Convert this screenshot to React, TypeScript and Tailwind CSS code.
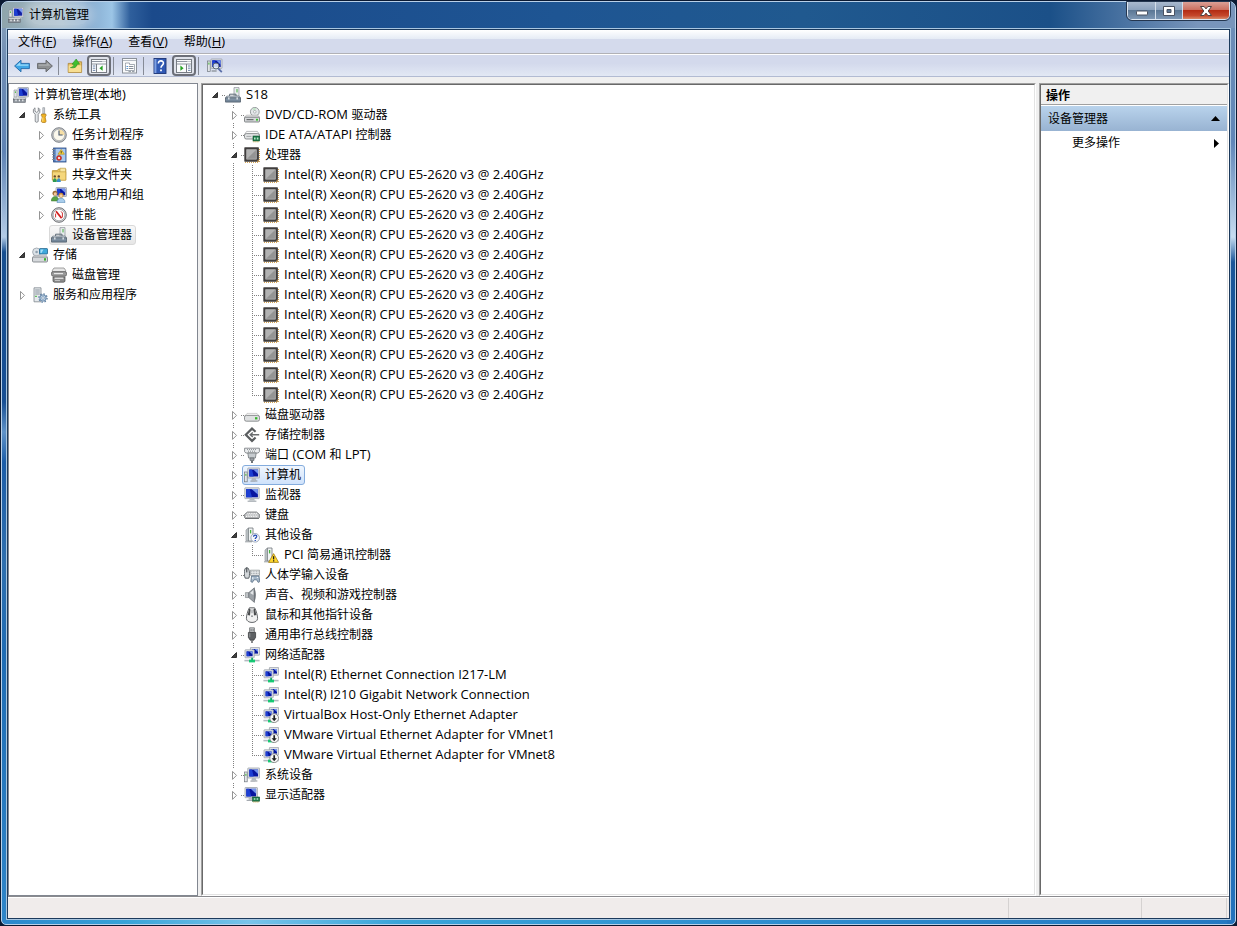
import { useState } from "react";
import type { ReactNode } from "react";

/* ---------- icons (16 x 16 grid) ---------- */

function Svg({ children }: { children: ReactNode }) {
  return (
    <svg viewBox="0 0 16 16" className="size-4 shrink-0" aria-hidden="true">
      {children}
    </svg>
  );
}

function Screen({ x, y, w, h, bezel = 1.2 }: { x: number; y: number; w: number; h: number; bezel?: number }) {
  const l = x + bezel;
  const t = y + bezel;
  const iw = w - bezel * 2;
  const ih = h - bezel * 2;
  return (
    <g>
      <rect x={x} y={y} width={w} height={h} rx="0.5" fill="#dfe2e6" stroke="#9299a2" strokeWidth="0.7" />
      <rect x={l} y={t} width={iw} height={ih} fill="#0816a0" />
      <path d={`M${l} ${t}h${iw * 0.3}l${iw * 0.2} ${ih}h-${iw * 0.5}z`} fill="#1d3fd2" />
      <path d={`M${l + iw * 0.45} ${t}h${iw * 0.55}v${ih * 0.65}z`} fill="#7394ec" />
    </g>
  );
}

const ManageIcon = () => (
  <Svg>
    <Screen x={5} y={0.5} w={10.5} h={9.4} />
    <path d="M1 3h3v7H1z" fill="#dfe2e5" stroke="#8a9098" strokeWidth="0.6" />
    <path d="M2.4 4.4v1.6" stroke="#3db334" strokeWidth="0.9" />
    <path d="M7 10h6l1 1.4H6z" fill="#c6cbd0" />
    <rect x="0.4" y="11" width="12" height="1.8" fill="#eceef0" stroke="#80868e" strokeWidth="0.6" />
    <rect x="0.4" y="12.6" width="12" height="2.8" fill="#8d949c" stroke="#62686f" strokeWidth="0.6" />
    <path d="M2.4 12.6h1.2v1.6H2.4zM5.8 12.6H7v1.6H5.8zM9.2 12.6h1.2v1.6H9.2z" fill="#f2f4f6" />
  </Svg>
);

const ToolsIcon = () => (
  <Svg>
    <path d="M3 .8v3.4L4.7 5.4 6.3 4.2V.8l1.5 1.6v3L6.2 7.3v6.8c0 1.6-3 1.6-3 0V7.3L1.4 5.4v-3z" fill="#e4e7ea" stroke="#75797e" strokeWidth="0.8" />
    <path d="M10.8.7h1.8v6h-1.8z" fill="#d2d6db" stroke="#81878d" strokeWidth="0.6" />
    <path d="M9.6 7h4.2l.3 1.6-1 1.4 1 4.6-1 .9h-2.8l-1-.9 1-4.6-1-1.4z" fill="#f0b323" stroke="#a8761a" strokeWidth="0.7" />
    <path d="M10.8 10.5v4" stroke="#ffe28a" />
  </Svg>
);

const ClockIcon = () => (
  <Svg>
    <circle cx="8" cy="8" r="7.3" fill="#c2c5c9" stroke="#75797e" strokeWidth="0.9" />
    <circle cx="8" cy="8" r="5.7" fill="#fbf8ec" stroke="#9a9da0" strokeWidth="0.6" />
    <path d="M8 2.4A5.6 5.6 0 0 1 13.6 8H8z" fill="#f6dfa6" />
    <path d="M8 3.6V8h3.6" fill="none" stroke="#45566e" strokeWidth="1.1" />
  </Svg>
);

const EventIcon = () => (
  <Svg>
    <rect x="2.6" y="1" width="12.4" height="14" fill="#4d79bd" stroke="#28487e" strokeWidth="0.8" />
    <rect x="4.6" y="1.8" width="9.8" height="12.4" fill="#a9c8ee" />
    <path d="M1.2 2.5h3M1.2 5h3M1.2 7.5h3M1.2 10h3M1.2 12.5h3" stroke="#7d8793" strokeWidth="1" />
    <path d="M10.2 2.4l3.2 4.8H7z" fill="#ffd83b" stroke="#b68b0e" strokeWidth="0.6" />
    <path d="M10.2 4v2.4" stroke="#222" strokeWidth="0.8" />
    <circle cx="8" cy="11" r="2.5" fill="#df3b30" stroke="#9a1d18" strokeWidth="0.5" />
    <path d="M7 10l2 2m0-2l-2 2" stroke="#fff" strokeWidth="0.8" />
  </Svg>
);

const SharedIcon = () => (
  <Svg>
    <path d="M1.4 3.6h5l1-1.6h7.4v11H1.4z" fill="#e9c35a" stroke="#b38b28" strokeWidth="0.7" />
    <path d="M9 1.2h5.6v7H9z" fill="#f8e7a4" stroke="#b99a44" strokeWidth="0.6" />
    <path d="M1.4 4.8h13.4v8.4H1.4z" fill="#f5d77c" stroke="#bd9532" strokeWidth="0.6" />
    <circle cx="3.8" cy="9.4" r="1.2" fill="#6a4a2c" />
    <circle cx="7.8" cy="9.4" r="1.2" fill="#6a4a2c" />
    <path d="M1.8 15c0-5 4-5 4 0z" fill="#2e9a50" />
    <path d="M5.8 15c0-5 4-5 4 0z" fill="#3a8fc9" />
  </Svg>
);

const UsersIcon = () => (
  <Svg>
    <Screen x={5} y={0.5} w={10.5} h={9} />
    <circle cx="4" cy="6.2" r="2.5" fill="#9a6a35" />
    <circle cx="4.3" cy="6.9" r="1.6" fill="#f2c697" />
    <path d="M.3 14c0-6 7.6-6 7.6 0z" fill="#58a244" stroke="#35702a" strokeWidth="0.5" />
    <circle cx="10" cy="8.2" r="2.5" fill="#c68c3a" />
    <circle cx="10" cy="8.8" r="1.6" fill="#f6d0a4" />
    <path d="M6 15.6c0-6 8-6 8 0z" fill="#a8cdec" stroke="#3d76a8" strokeWidth="0.5" />
  </Svg>
);

const PerfIcon = () => (
  <Svg>
    <circle cx="8" cy="8" r="7.3" fill="#d8dadc" stroke="#5d6064" strokeWidth="0.9" />
    <circle cx="8" cy="8" r="5.8" fill="#fff" stroke="#86898d" strokeWidth="0.6" />
    <path d="M4.6 10.4V6.6M11.4 10.4V6l-1.4-1.6" fill="none" stroke="#c33" strokeWidth="1" />
    <path d="M5 4.2l5.6 7" stroke="#d01e1e" strokeWidth="1.8" />
  </Svg>
);

const DeviceIcon = () => (
  <Svg>
    <path d="M9 .6h5v8.6H9z" fill="#e9ecee" stroke="#878e94" strokeWidth="0.7" />
    <path d="M12 2v3.4" stroke="#45b03f" strokeWidth="1" />
    <path d="M4.6 9.2V7.2h6.4v2" fill="none" stroke="#5d6a76" strokeWidth="1" />
    <path d="M1.8 9h12.4l1.4 2H.4z" fill="#bcc7d1" stroke="#68737e" strokeWidth="0.6" />
    <path d="M.5 10.9h15v4.2H.5z" fill="#74879a" stroke="#465360" strokeWidth="0.7" />
    <path d="M3 10.4h1.6v2.2H3zM11.4 10.4H13v2.2h-1.6z" fill="#e8edf1" />
    <path d="M1 12h14" stroke="#9eabb7" strokeWidth="0.6" />
  </Svg>
);

const StorageIcon = () => (
  <Svg>
    <circle cx="4.6" cy="5" r="4" fill="#dde3e8" stroke="#8b949c" strokeWidth="0.7" />
    <circle cx="4.6" cy="5" r="1.3" fill="#8fa0ae" />
    <rect x="7.5" y="1.6" width="8" height="5.4" rx="0.6" fill="#3fa9dc" stroke="#23638a" strokeWidth="0.8" />
    <path d="M8.5 2.6h3l-2 3.4h-1z" fill="#a8e0f8" />
    <path d="M2 8.4h12.4l1.2 2H.6z" fill="#f1f2f3" stroke="#9ba0a5" strokeWidth="0.6" />
    <rect x="0.5" y="10" width="15" height="5" rx="1" fill="#d6d9dc" stroke="#73787d" strokeWidth="0.8" />
    <rect x="12" y="11.2" width="2" height="2.4" fill="#38b22d" />
  </Svg>
);

const DisksIcon = () => (
  <Svg>
    <path d="M3 1h10l1.6 2.2v3H1.4v-3z" fill="#e6e6e6" stroke="#7c7c7c" strokeWidth="0.7" />
    <rect x="0.5" y="4.6" width="15" height="4.6" rx="1.6" fill="#9a9a9a" stroke="#525252" strokeWidth="0.7" />
    <path d="M3 6.6h9" stroke="#eee" strokeWidth="1.1" />
    <path d="M2 10h12v4.4l-1.4.8H3.4L2 14.4z" fill="#8b8b8b" stroke="#4b4b4b" strokeWidth="0.7" />
    <path d="M3.6 11.2h8.8" stroke="#f0f0f0" strokeWidth="1.2" />
    <path d="M4 13.6h5" stroke="#d5d5d5" strokeWidth="0.8" />
  </Svg>
);

const ServicesIcon = () => (
  <Svg>
    <path d="M2 .8h7v14H2z" fill="#e6eaed" stroke="#7d868e" strokeWidth="0.8" />
    <path d="M3.2 3h4.6M3.2 5h4.6M3.2 7h4.6" stroke="#7f8a94" strokeWidth="0.9" />
    <path d="M3.2 9.4h1.6" stroke="#45b43b" strokeWidth="1.2" />
    <circle cx="11" cy="11" r="3.2" fill="#b9cfe4" stroke="#5d7fa1" strokeWidth="0.9" />
    <circle cx="11" cy="11" r="4.1" fill="none" stroke="#5d7fa1" strokeWidth="1.3" strokeDasharray="1.5 1.7" />
    <circle cx="11" cy="11" r="1.3" fill="#fff" stroke="#5d7fa1" strokeWidth="0.6" />
  </Svg>
);

const DvdIcon = () => (
  <Svg>
    <circle cx="10.8" cy="4.8" r="4.4" fill="#e4e8e9" stroke="#7f8688" strokeWidth="0.8" />
    <path d="M10.8 4.8l-2.4-3A4 4 0 0 1 12 1.2z" fill="#bfe3c6" />
    <circle cx="10.8" cy="4.8" r="1.3" fill="#fff" stroke="#8a9193" strokeWidth="0.6" />
    <path d="M2.4 8.2h11.4l1.8 2H.5z" fill="#f6f6f6" stroke="#9a9a9a" strokeWidth="0.6" />
    <rect x="0.5" y="10.2" width="15" height="4.8" rx="0.8" fill="#d6d8da" stroke="#6b6e71" strokeWidth="0.8" />
    <path d="M2.5 12.7h7" stroke="#55585b" strokeWidth="1" />
    <rect x="12" y="11.8" width="2" height="1.8" fill="#36c12c" />
  </Svg>
);

const IdeIcon = () => (
  <Svg>
    <path d="M2.6 4.4h10.8l2 3v2H.6v-2z" fill="#fafafa" stroke="#a2a5a7" strokeWidth="0.7" />
    <rect x="0.5" y="6.6" width="15" height="5.4" rx="1.8" fill="#e2e4e5" stroke="#777b7e" strokeWidth="0.8" />
    <path d="M2.4 9.4h5" stroke="#94989b" strokeWidth="0.8" />
    <rect x="9" y="9" width="6.6" height="5" fill="#1d7b4c" stroke="#0c4f29" strokeWidth="0.6" />
    <path d="M10 10.4h1.6v2H10zM12.8 10.4h1.6v2h-1.6z" fill="#b8e6c6" />
    <path d="M9.4 14.8h6" stroke="#c9a544" strokeWidth="1" strokeDasharray="1 1" />
  </Svg>
);

const CpuIcon = () => (
  <Svg>
    <path d="M1 15.4h14M15.4 2v13" stroke="#c98f2b" strokeWidth="0.9" strokeDasharray="1 1" />
    <rect x="0.3" y="0.3" width="14.6" height="14.4" rx="0.6" fill="#3f3d3d" />
    <path d="M2.6 2.6h9.8v9.6H2.6z" fill="#949494" stroke="#bdbdbd" strokeWidth="0.7" />
    <path d="M3 3h9l-9 8.8z" fill="#b2b2b2" />
    <path d="M12.8 14.4l1.8-1.8v1.8z" fill="#e9a43a" />
  </Svg>
);

const DriveIcon = () => (
  <Svg>
    <path d="M3 6.4h10l2.4 3H.6z" fill="#fafafa" stroke="#b3b3b3" strokeWidth="0.6" />
    <rect x="0.5" y="8.4" width="15" height="5.8" rx="1.8" fill="#dfe1e2" stroke="#777a7c" strokeWidth="0.8" />
    <rect x="11" y="10.2" width="2.4" height="2.2" fill="#33b52a" />
  </Svg>
);

const StorageCtlIcon = () => (
  <Svg>
    <path d="M11.6 4.8L8 1.6 1.8 7.7 8 13.900l3.600-3.400" fill="none" stroke="#5a5d5f" strokeWidth="2.2" />
    <path d="M6.2 7.7h9M8.8 5.4L6.2 7.7 8.800 10" fill="none" stroke="#6a6d6f" strokeWidth="1.4" />
  </Svg>
);

const PortIcon = () => (
  <Svg>
    <path d="M.6 1.2h14.8v3.4L14.200 6H1.800L.6 4.600z" fill="#eceef0" stroke="#71767a" strokeWidth="0.8" />
    <path d="M3 2.6h10M4 4.200h8" stroke="#6f7579" strokeWidth="0.8" strokeDasharray="1 1" />
    <path d="M3.800 6h8.400l-.8 5H4.600z" fill="#c6cbcf" stroke="#71767a" strokeWidth="0.8" />
    <path d="M6 11h4v2.400H6z" fill="#9ea4a9" stroke="#5e6469" strokeWidth="0.7" />
    <path d="M8 13.400V16" stroke="#5e6469" strokeWidth="1.8" />
  </Svg>
);

const ComputerIcon = () => (
  <Svg>
    <Screen x={3.8} y={1} w={11.8} h={10} bezel={1.5} />
    <path d="M8 11h3.600l.8 2.600H7.200z" fill="#b4bac0" />
    <path d="M6.400 13.600h7v1h-7z" fill="#8f959c" />
    <rect x="0.6" y="5" width="2.6" height="9.8" fill="#e4e7ea" stroke="#70777e" strokeWidth="0.7" />
    <path d="M1.900 6.800v2" stroke="#3db334" strokeWidth="1" />
  </Svg>
);

const MonitorIcon = () => (
  <Svg>
    <Screen x={0.8} y={0.8} w={14.4} h={10.8} bezel={1.3} />
    <path d="M6 11.600h4l1 2H5z" fill="#b4bac0" />
    <path d="M3.600 13.600h8.800v1.200H3.600z" fill="#a3a9af" />
  </Svg>
);

const KeyboardIcon = () => (
  <Svg>
    <path d="M3.400 5h9.200l3 2.600v2.800l-1 1H1.400l-1-1V7.600z" fill="#b9bbbd" stroke="#74777a" strokeWidth="0.8" />
    <path d="M3.400 6.400h9.600M2.400 8h11.600M2 9.600h12" stroke="#fff" strokeWidth="1" strokeDasharray="1 0.7" />
    <path d="M1 11.400h14" stroke="#5f6265" strokeWidth="0.8" />
  </Svg>
);

const OtherBody = () => (
  <g>
    <path d="M2 3L4.400 1v12.800H2z" fill="#c5cacd" stroke="#83898e" strokeWidth="0.6" />
    <path d="M4.400 1H9v13H4.400z" fill="#f1f3f4" stroke="#6f757a" strokeWidth="0.8" />
    <path d="M6.600 3v3.400" stroke="#48b53f" strokeWidth="1.3" />
    <path d="M1 14.800h7" stroke="#8c9297" strokeWidth="0.9" />
  </g>
);

const OtherIcon = () => (
  <Svg>
    <OtherBody />
    <circle cx="11.2" cy="10.8" r="4.3" fill="#f6f8fb" stroke="#7d8ca3" strokeWidth="0.7" />
    <path d="M9.600 9.700c0-2.300 3.400-2 3.100 0-.2 1.100-1.500 1-1.500 2.300" fill="none" stroke="#1f48b4" strokeWidth="1.2" />
    <path d="M10.600 13h1.300v1h-1.300z" fill="#1f48b4" />
  </Svg>
);

const WarnIcon = () => (
  <Svg>
    <OtherBody />
    <path d="M10.600 6.600l5 8.800h-10z" fill="#ffd92e" stroke="#a27d10" strokeWidth="0.8" strokeLinejoin="round" />
    <path d="M10.600 9.200v3.200" stroke="#1c1c1c" strokeWidth="1.3" />
    <path d="M10 13.200h1.300v1.200H10z" fill="#1c1c1c" />
  </Svg>
);

const HidIcon = () => (
  <Svg>
    <path d="M2.800.6c3 0 3.200 8 2 10.600H1.200C-.2 8-.2.6 2.800.6z" fill="#d4d8db" stroke="#4c5257" strokeWidth="0.9" />
    <path d="M2.800 1v4.400" stroke="#33383c" />
    <path d="M6.400 3.200h9.200v5.200H6.400z" fill="#eceeef" stroke="#84898d" strokeWidth="0.7" />
    <path d="M7.200 4.800h8M7.200 6.600h8" stroke="#8e9499" strokeWidth="0.8" strokeDasharray="1 0.6" />
    <path d="M7.600 9h7.400l.8 5.600-1.600.8-1.600-2.600H10l-1.600 2.600-1.600-.8z" fill="#a4b6c8" stroke="#4a6178" strokeWidth="0.7" />
    <path d="M8.800 10.200v2M12.800 10.400h1.400" stroke="#f5fafc" strokeWidth="1" />
  </Svg>
);

const SoundIcon = () => (
  <Svg>
    <path d="M1.400 5.600h3.400v5H1.400z" fill="#bfc3c6" stroke="#787d82" strokeWidth="0.6" />
    <path d="M4.800 5.600L10.400.8v14.600l-5.600-4.800z" fill="#9da3a8" stroke="#60666b" strokeWidth="0.7" />
    <path d="M6 6l3.400-3v5z" fill="#e3e6e8" />
    <path d="M10.400 1.600c1.800 3 1.800 10 0 13z" fill="#5f656a" />
  </Svg>
);

const MouseIcon = () => (
  <Svg>
    <path d="M5.400.8h5.200c1.800 3 3 8 3 10.600 0 5.400-11.200 5.400-11.200 0 0-2.600 1.200-7.600 3-10.600z" fill="#f1f1f1" stroke="#55585b" strokeWidth="0.9" />
    <path d="M5.200 1.600L3.600 8l2.400.6.6-6.200zM10.800 1.600L12.400 8l-2.400.6-.6-6.200z" fill="#4a4c4e" />
    <path d="M8 2.400v3.800" stroke="#a9adb0" strokeWidth="1.4" />
    <circle cx="8" cy="9.2" r="0.9" fill="#85898c" />
  </Svg>
);

const UsbIcon = () => (
  <Svg>
    <path d="M5.600.8h4.800v4.600H5.600z" fill="#c9ccce" stroke="#6b6e71" strokeWidth="0.8" />
    <path d="M6.600 2.200h1v1.600h-1zM8.600 2.200h1v1.600h-1z" fill="#55585b" />
    <path d="M4.400 5.400h7.200v5l-1.800 2.800H6.200l-1.800-2.800z" fill="#5d6063" stroke="#303234" strokeWidth="0.7" />
    <path d="M5.800 6.200v4" stroke="#94989b" />
    <path d="M8 13.200V16" stroke="#6b6e71" strokeWidth="1.6" />
  </Svg>
);

const NetBody = () => (
  <g>
    <Screen x={6.4} y={0.4} w={9.2} h={7.8} bezel={1.6} />
    <Screen x={1} y={2.8} w={9.2} h={8} bezel={1.6} />
    <path d="M.4 13.600h15.200" stroke="#b3bac0" strokeWidth="1.6" />
    <path d="M5 12.600h6v2.800H5z" fill="#17c974" />
    <path d="M7.200 10.800h1.800v2.400H7.200z" fill="#16ad67" />
  </g>
);

const NetIcon = () => (
  <Svg>
    <NetBody />
  </Svg>
);

const NetDownIcon = () => (
  <Svg>
    <NetBody />
    <circle cx="11.2" cy="11.2" r="4.4" fill="#f7f7f7" stroke="#777" strokeWidth="0.8" />
    <path d="M11.200 8.200v4" stroke="#222" strokeWidth="1.7" />
    <path d="M8.600 11.200h5.200l-2.600 3z" fill="#222" />
  </Svg>
);

const DisplayIcon = () => (
  <Svg>
    <Screen x={1} y={0.5} w={12.4} h={10.2} bezel={1.3} />
    <path d="M4.600 10.700h3.800v2H4.600z" fill="#b4bac0" />
    <path d="M2.600 12.800h6v1h-6z" fill="#8f959c" />
    <rect x="8.6" y="10" width="7" height="4.2" fill="#1d7b4c" stroke="#0c4f29" strokeWidth="0.6" />
    <path d="M9.800 11.200h1.600v1.600H9.800zM12.600 11.200h1.600v1.600h-1.600z" fill="#b8e6c6" />
    <path d="M9.400 15h6" stroke="#c9a544" strokeWidth="1" strokeDasharray="1 1" />
  </Svg>
);

/* toolbar icons */

const BackIcon = () => (
  <Svg>
    <path d="M.6 8L7 2.200v3.200h8.400v5.200H7v3.200z" fill="#3fa6e6" stroke="#1f66a8" strokeWidth="0.9" strokeLinejoin="round" />
    <path d="M2.200 7.800l4-3.600v2.200h8.200v1.400z" fill="#9bdcfa" />
  </Svg>
);

const ForwardIcon = () => (
  <Svg>
    <path d="M15.400 8L9 2.200v3.200H.6v5.200H9v3.200z" fill="#8e9092" stroke="#606264" strokeWidth="0.9" strokeLinejoin="round" />
    <path d="M13.600 7.800l-3.800-3.400v2H1.600v1.400z" fill="#acaeb0" />
  </Svg>
);

const UpFolderIcon = () => (
  <Svg>
    <path d="M1.200 5.400h6l1-1.600h6.400v10.600H1.200z" fill="#e8c463" stroke="#a98235" strokeWidth="0.8" />
    <path d="M1.600 7.400h12.600v6.600H1.600z" fill="#f7de91" />
    <path d="M3.400 9.600c2.400-.4 3.400-1.600 3.600-3.400H5L9.200 1l3.400 5.200h-2.400c-.4 3-2.800 4.200-6.800 3.400z" fill="#3fc02f" stroke="#2a8f22" strokeWidth="0.6" />
  </Svg>
);

function PaneIcon({ right }: { right?: boolean }) {
  return (
    <Svg>
      <rect x="0.5" y="1.5" width="15" height="13" fill="#fafbfc" stroke="#787d84" />
      <path d="M1 3.500h14M1 6h14" stroke="#9096a0" />
      <path d="M11.500 3.500h1M13.500 3.500h1" stroke="#fff" />
      <path d={right ? "M10.500 6v8.500" : "M5.500 6v8.500"} stroke="#787d84" />
      <path d={right ? "M12 8h2.500M12 10.200h2.500M12 12.400h2.500" : "M1.800 8h2.500M1.800 10.200h2.500M1.800 12.400h2.500"} stroke="#6d86ab" />
      <path d={right ? "M4.400 7.600v5.200L7.600 10.200z" : "M11.600 7.600v5.200L8.400 10.200z"} fill="#26a222" />
    </Svg>
  );
}

const PropsIcon = () => (
  <Svg>
    <rect x="0.5" y="0.5" width="14" height="14.5" fill="#f8f9fa" stroke="#8b9199" />
    <path d="M1 2.500h13" stroke="#b4bac2" />
    <path d="M3.500 6.500V5h4v1.500h5v6h-9z" fill="#fff" stroke="#8f98a2" strokeWidth="0.8" />
    <path d="M4.600 8.500h1.200M4.600 10.500h1.200" stroke="#2b79c9" />
    <path d="M6.800 8.500h4.600M6.800 10.500h4.600" stroke="#868e97" />
    <path d="M6.500 13.600H9M10 13.600h2.500" stroke="#8f98a2" />
  </Svg>
);

const HelpIcon = () => (
  <Svg>
    <rect x="2" y="0.5" width="12" height="15" fill="#3059b5" stroke="#1c3474" strokeWidth="0.9" />
    <path d="M2.400 1h2v14h-2z" fill="#7fa1e2" />
    <path d="M6.400 5.400c0-3.600 5.400-3.200 5 0-.3 2.200-2.400 2-2.400 4.400" fill="none" stroke="#fff" strokeWidth="1.6" />
    <path d="M8.100 11.400h1.800v1.800H8.100z" fill="#fff" />
  </Svg>
);

const ScanIcon = () => (
  <Svg>
    <rect x="0.6" y="3" width="2.6" height="10.4" fill="#e2e5e8" stroke="#70777e" strokeWidth="0.7" />
    <path d="M1.900 4.600v2" stroke="#3db334" />
    <Screen x={4} y={1} w={11} h={9.4} bezel={1.3} />
    <path d="M4.600 13h5" stroke="#8f959c" strokeWidth="1.4" />
    <circle cx="9" cy="8" r="3" fill="#e6f0f9" fillOpacity="0.85" stroke="#5c6874" strokeWidth="1" />
    <path d="M11.200 10.400l3.600 3.800" stroke="#5b6fa8" strokeWidth="1.8" />
  </Svg>
);

/* ---------- text ---------- */

/* Latin runs are set one step larger than the Chinese text beside them. */
function Label({ text }: { text: string }) {
  return (
    <span>
      {text.split(/([\x20-\x7e]+)/).map((run, i) =>
        i % 2 === 1 ? (
          <span key={i} className="text-[13px] leading-none">
            {run}
          </span>
        ) : (
          run
        ),
      )}
    </span>
  );
}

/* ---------- tree ---------- */

type Node = {
  icon: () => ReactNode;
  label: string;
  level: number;
  state?: "open" | "closed";
};

const SIDE: Node[] = [
  { level: 0, icon: ManageIcon, label: "计算机管理(本地)" },
  { level: 1, icon: ToolsIcon, label: "系统工具", state: "open" },
  { level: 2, icon: ClockIcon, label: "任务计划程序", state: "closed" },
  { level: 2, icon: EventIcon, label: "事件查看器", state: "closed" },
  { level: 2, icon: SharedIcon, label: "共享文件夹", state: "closed" },
  { level: 2, icon: UsersIcon, label: "本地用户和组", state: "closed" },
  { level: 2, icon: PerfIcon, label: "性能", state: "closed" },
  { level: 2, icon: DeviceIcon, label: "设备管理器" },
  { level: 1, icon: StorageIcon, label: "存储", state: "open" },
  { level: 2, icon: DisksIcon, label: "磁盘管理" },
  { level: 1, icon: ServicesIcon, label: "服务和应用程序", state: "closed" },
];

const DEVICES: Node[] = [
  { level: 0, icon: DeviceIcon, label: "S18", state: "open" },
  { level: 1, icon: DvdIcon, label: "DVD/CD-ROM 驱动器", state: "closed" },
  { level: 1, icon: IdeIcon, label: "IDE ATA/ATAPI 控制器", state: "closed" },
  { level: 1, icon: CpuIcon, label: "处理器", state: "open" },
  ...Array.from({ length: 12 }, () => ({ level: 2, icon: CpuIcon, label: "Intel(R) Xeon(R) CPU E5-2620 v3 @ 2.40GHz" })),
  { level: 1, icon: DriveIcon, label: "磁盘驱动器", state: "closed" },
  { level: 1, icon: StorageCtlIcon, label: "存储控制器", state: "closed" },
  { level: 1, icon: PortIcon, label: "端口 (COM 和 LPT)", state: "closed" },
  { level: 1, icon: ComputerIcon, label: "计算机", state: "closed" },
  { level: 1, icon: MonitorIcon, label: "监视器", state: "closed" },
  { level: 1, icon: KeyboardIcon, label: "键盘", state: "closed" },
  { level: 1, icon: OtherIcon, label: "其他设备", state: "open" },
  { level: 2, icon: WarnIcon, label: "PCI 简易通讯控制器" },
  { level: 1, icon: HidIcon, label: "人体学输入设备", state: "closed" },
  { level: 1, icon: SoundIcon, label: "声音、视频和游戏控制器", state: "closed" },
  { level: 1, icon: MouseIcon, label: "鼠标和其他指针设备", state: "closed" },
  { level: 1, icon: UsbIcon, label: "通用串行总线控制器", state: "closed" },
  { level: 1, icon: NetIcon, label: "网络适配器", state: "open" },
  { level: 2, icon: NetIcon, label: "Intel(R) Ethernet Connection I217-LM" },
  { level: 2, icon: NetIcon, label: "Intel(R) I210 Gigabit Network Connection" },
  { level: 2, icon: NetDownIcon, label: "VirtualBox Host-Only Ethernet Adapter" },
  { level: 2, icon: NetDownIcon, label: "VMware Virtual Ethernet Adapter for VMnet1" },
  { level: 2, icon: NetDownIcon, label: "VMware Virtual Ethernet Adapter for VMnet8" },
  { level: 1, icon: ComputerIcon, label: "系统设备", state: "closed" },
  { level: 1, icon: DisplayIcon, label: "显示适配器", state: "closed" },
];

const PASS_LINE =
  "bg-[image:repeating-linear-gradient(to_bottom,#808080_0_1px,transparent_1px_2px)] bg-[length:1px_100%] bg-[position:10px_0] bg-no-repeat";
const BRANCH_LINE =
  "bg-[image:repeating-linear-gradient(to_bottom,#808080_0_1px,transparent_1px_2px),repeating-linear-gradient(to_right,#808080_0_1px,transparent_1px_2px)] bg-[length:1px_100%,11px_1px] bg-[position:10px_0,10px_10px] bg-no-repeat";
const LAST_LINE =
  "bg-[image:repeating-linear-gradient(to_bottom,#808080_0_1px,transparent_1px_2px),repeating-linear-gradient(to_right,#808080_0_1px,transparent_1px_2px)] bg-[length:1px_10px,11px_1px] bg-[position:10px_0,10px_10px] bg-no-repeat";
const ROOT_LINE =
  "bg-[image:repeating-linear-gradient(to_right,#808080_0_1px,transparent_1px_2px)] bg-[length:11px_1px] bg-[position:10px_10px] bg-no-repeat";

function hasNext(nodes: Node[], index: number, level: number) {
  for (let i = index + 1; i < nodes.length; i++) {
    if (nodes[i].level < level) return false;
    if (nodes[i].level === level) return true;
  }
  return false;
}

function Toggle({ state }: { state: "open" | "closed" }) {
  return (
    <button type="button" tabIndex={-1} aria-label={state === "open" ? "折叠" : "展开"} className="ml-1 size-3.5 shrink-0 bg-white">
      <svg viewBox="0 0 14 14" className="size-3.5" aria-hidden="true">
        {state === "open" ? (
          <path d="M9.500 4.500v5h-5z" fill="#404040" stroke="#262626" strokeWidth="0.9" />
        ) : (
          <path d="M5.500 3.400v8l4-4z" fill="#fff" stroke="#949494" strokeWidth="1" />
        )}
      </svg>
    </button>
  );
}

type TreeProps = {
  nodes: Node[];
  name: string;
  initial: string;
  lines?: boolean;
  rootToggle?: boolean;
  selectedClass: string;
};

function Tree({ nodes, name, initial, lines, rootToggle, selectedClass }: TreeProps) {
  const [selected, setSelected] = useState(() => nodes.findIndex((n) => n.label === initial));
  return (
    <ul role="tree" aria-label={name}>
      {nodes.map((node, index) => {
        const first = rootToggle ? 0 : 1;
        const guides = Array.from({ length: Math.max(0, node.level - first) }, (_, i) => i + first);
        let own = "";
        if (lines) {
          own = node.level === 0 ? ROOT_LINE : hasNext(nodes, index, node.level) ? BRANCH_LINE : LAST_LINE;
        }
        return (
          <li key={index} role="treeitem" aria-level={node.level + 1} aria-selected={index === selected} className="flex h-5 items-center">
            {guides.map((g) => (
              <span key={g} className={`h-5 w-[19px] shrink-0 ${lines && g > 0 && hasNext(nodes, index, g) ? PASS_LINE : ""}`} />
            ))}
            {node.level >= first && (
              <span className={`-mr-0.5 flex h-5 w-[21px] shrink-0 items-center ${own}`}>
                {node.state && <Toggle state={node.state} />}
              </span>
            )}
            <button
              type="button"
              onClick={() => setSelected(index)}
              className={`flex h-5 items-center gap-[5px] rounded-[3px] border pr-[3px] pl-px whitespace-nowrap ${index === selected ? selectedClass : "border-transparent"}`}
            >
              <node.icon />
              <Label text={node.label} />
            </button>
          </li>
        );
      })}
    </ul>
  );
}

/* ---------- window parts ---------- */

function MenuItem({ text, hotkey }: { text: string; hotkey: string }) {
  return (
    <button type="button" className="h-6 px-2">
      {text}
      <span className="text-[13px] leading-none">
        (<span className="underline">{hotkey}</span>)
      </span>
    </button>
  );
}

function ToolButton({ label, pressed, children }: { label: string; pressed?: boolean; children: ReactNode }) {
  return (
    <button
      type="button"
      aria-label={label}
      className={`flex h-[21px] shrink-0 items-center justify-center rounded-[4px] ${pressed ? "ml-px w-6 border-2 border-[#6c6f78] bg-[#dfe2ea]" : "w-[23px]"}`}
    >
      {children}
    </button>
  );
}

const Divider = () => <span className="mr-1 ml-[2px] h-[18px] w-px shrink-0 bg-[#868b96]" />;

export default function App() {
  return (
    <div className="flex min-h-screen flex-col bg-[#0b1a33] p-px font-['Open_Sans','Noto_Sans_CJK_SC',sans-serif] text-[12px] leading-5 text-black">
      <div className="flex flex-1 flex-col rounded-t-[7px] rounded-b-[5px] border border-[#b9d0e8] bg-[#2a86c8] bg-[image:linear-gradient(to_bottom,#8ea6bb_0,#6f8db4_60px,#5f83b4_150px,#b3cbe6_235px,#174f90_250px,#184f94_400px,#5f92c8_430px,#1c5da8_460px,#2f6fae_560px,#1f6cb4_650px,#2f86c9_100%),linear-gradient(to_bottom,#6f90b8_0,#5f86b8_140px,#c6dcf0_235px,#1b5699_260px,#1b5699_450px,#2373bd_100%),linear-gradient(to_right,#2b87cc,#38a3d8_10%,#78c4ea_20%,#3aa5d9_32%,#2f8fd0_60%,#2478c2)] bg-[length:8px_100%,8px_100%,100%_100%] bg-[position:left_top,right_top,left_top] bg-no-repeat px-1 pb-1">
        {/* title bar */}
        <header className="-mx-1 flex h-[26px] items-start justify-between rounded-t-[6px] bg-[linear-gradient(to_right,#8fa5ac_0,#9db6c8_60px,#84a9cd_85px,#9cc5e6_110px,#2f5f9c_128px,#1b4a8b_150px,#1e5593_45%,#20598f_65%,#1b5088_85%,#7895bb_97%,#7895bb)]">
          <div className="flex items-center gap-[5px] self-center pl-1.5">
            <ManageIcon />
            <h1 className="rounded-full bg-white/30 shadow-[0_0_8px_5px_rgba(255,255,255,0.3)]">计算机管理</h1>
          </div>
          <div className="mr-[5px] flex h-[18px] overflow-hidden rounded-b-[5px] border border-t-0 border-[#dce6f2] outline outline-[#24364f]">
            <button
              type="button"
              aria-label="最小化"
              className="flex w-7 items-center justify-center border-r border-[#d4deea] bg-[linear-gradient(#a9b9ce,#8ba1bc_48%,#5b7795_50%,#7d97b4)]"
            >
              <svg viewBox="0 0 14 12" className="h-3 w-3.5" aria-hidden="true">
                <rect x="1.5" y="6" width="11" height="4" rx="0.5" fill="#fff" stroke="#4a5262" />
              </svg>
            </button>
            <button
              type="button"
              aria-label="最大化"
              className="flex w-[27px] items-center justify-center border-r border-[#d4deea] bg-[linear-gradient(#a9b9ce,#8ba1bc_48%,#5b7795_50%,#7d97b4)]"
            >
              <svg viewBox="0 0 14 12" className="h-3 w-3.5" aria-hidden="true">
                <path d="M1.500 1.500h11v9h-11zM5 4.500v3h4v-3z" fill="#fff" fillRule="evenodd" stroke="#4a5262" />
              </svg>
            </button>
            <button
              type="button"
              aria-label="关闭"
              className="flex w-[46px] items-center justify-center bg-[linear-gradient(#dba096,#cb6d5d_48%,#b32c14_50%,#c5472b_80%,#d88a6a)]"
            >
              <svg viewBox="0 0 14 12" className="h-3 w-3.5" aria-hidden="true">
                <path d="M1.500 1.500h3.600L7 3.900l1.900-2.400h3.600L9.200 6l3.300 4.500H8.900L7 8.100l-1.900 2.400H1.500L4.800 6z" fill="#fff" stroke="#4d4040" />
              </svg>
            </button>
          </div>
        </header>

        {/* client area */}
        <div className="flex flex-1 flex-col border border-[#a9c6e0]">
          <div className="flex flex-1 flex-col border border-[#1c3a5c] bg-[#f0f0f0]">
            <nav aria-label="菜单" className="flex h-6 items-center border-b border-[#b1b1b6] bg-[linear-gradient(#fff_0,#e5ebf5_9px,#d4daec_9px)] pl-0.5">
              <MenuItem text="文件" hotkey="F" />
              <MenuItem text="操作" hotkey="A" />
              <MenuItem text="查看" hotkey="V" />
              <MenuItem text="帮助" hotkey="H" />
            </nav>
            <div role="toolbar" aria-label="工具栏" className="flex h-[23px] items-center border-t border-b border-t-white border-b-[#b2bbd2] bg-[linear-gradient(#d3d9ec_40%,#e2e8f4)] pl-0.5">
              <ToolButton label="后退">
                <BackIcon />
              </ToolButton>
              <ToolButton label="前进">
                <ForwardIcon />
              </ToolButton>
              <Divider />
              <ToolButton label="向上">
                <UpFolderIcon />
              </ToolButton>
              <ToolButton label="显示/隐藏控制台树" pressed>
                <PaneIcon />
              </ToolButton>
              <Divider />
              <ToolButton label="属性">
                <PropsIcon />
              </ToolButton>
              <Divider />
              <ToolButton label="帮助">
                <HelpIcon />
              </ToolButton>
              <ToolButton label="显示/隐藏操作窗格" pressed>
                <PaneIcon right />
              </ToolButton>
              <Divider />
              <ToolButton label="扫描检测硬件改动">
                <ScanIcon />
              </ToolButton>
            </div>

            <div className="flex flex-1 pt-1.5">
              <aside className="w-[190px] shrink-0 border border-[#828790] bg-white pt-px pl-0.5">
                <Tree nodes={SIDE} name="控制台树" initial="设备管理器" selectedClass="border-[#d9d9d9] bg-[linear-gradient(#f8f8f8,#e6e6e6)]" />
              </aside>

              <main className="ml-[3px] min-w-0 flex-1 border border-t-[#a0a0a0] border-r-white border-b-white border-l-[#a0a0a0]">
                <div className="h-full border border-t-[#696969] border-r-[#e3e3e3] border-b-[#e3e3e3] border-l-[#696969] bg-white pl-px">
                  <Tree
                    nodes={DEVICES}
                    name="设备"
                    initial="计算机"
                    lines
                    rootToggle
                    selectedClass="border-[#84acdd] bg-[linear-gradient(#f0f6fe,#cfe2fb)]"
                  />
                </div>
              </main>

              <aside className="ml-[3px] w-[190px] shrink-0 border border-t-[#a0a0a0] border-r-white border-b-white border-l-[#a0a0a0]">
                <div className="h-full border border-t-[#696969] border-r-[#e3e3e3] border-b-[#e3e3e3] border-l-[#696969] bg-white">
                  <h2 className="h-5 border-b border-[#a0a0a0] bg-[#f0f0f0] pl-[5px] leading-[22px] font-bold">操作</h2>
                  <button
                    type="button"
                    className="mt-px flex h-[25px] w-full items-center justify-between bg-[linear-gradient(#b9d3ec,#98b3d2)] pr-[7px] pl-[7px]"
                  >
                    设备管理器
                    <svg viewBox="0 0 9 5" className="h-[5px] w-[9px]" aria-hidden="true">
                      <path d="M4.500 0L9 5H0z" fill="#000" />
                    </svg>
                  </button>
                  <button type="button" className="flex h-6 w-full items-center justify-between pr-2 pl-[31px]">
                    更多操作
                    <svg viewBox="0 0 5 9" className="h-[9px] w-[5px]" aria-hidden="true">
                      <path d="M0 0v9l5-4.500z" fill="#000" />
                    </svg>
                  </button>
                </div>
              </aside>
            </div>

            <footer className="flex h-[22px] justify-end border-t border-[#8a8a8e] bg-white pt-px">
              <div className="flex flex-1 justify-end bg-[#f0eceb]">
                <span className="w-[133px] border-l border-[#d5d2d1]" />
                <span className="mr-0.5 w-[86px] border-r border-l border-[#d5d2d1]" />
              </div>
            </footer>
          </div>
        </div>
      </div>
    </div>
  );
}
